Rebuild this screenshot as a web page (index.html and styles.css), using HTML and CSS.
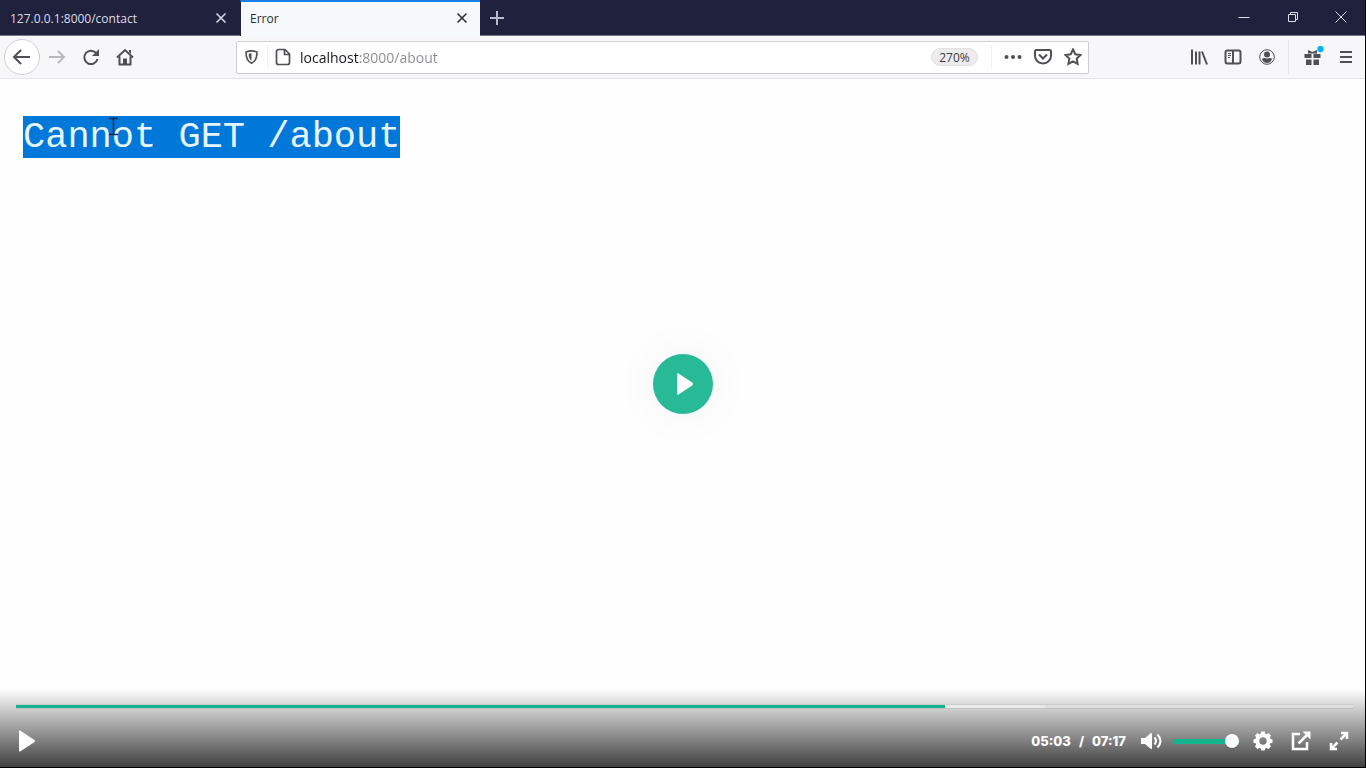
FILE: index.html
```
<!DOCTYPE html>
<html lang="en">
<head>
<meta charset="utf-8">
<meta name="viewport" content="width=device-width, initial-scale=1">
<title>Error</title>
<link rel="stylesheet" href="styles.css">
</head>
<body>
<div class="player">
  <header class="tabstrip">
    <div class="tab">
      <span class="tab-title">127.0.0.1:8000/contact</span>
      <button class="tab-close" aria-label="Close tab"><svg width="12" height="12" viewBox="0 0 12 12"><path d="M1.500 1.500l9 9m0-9l-9 9"/></svg></button>
    </div>
    <div class="tab tab-active">
      <span class="tab-title">Error</span>
      <button class="tab-close" aria-label="Close tab"><svg width="12" height="12" viewBox="0 0 12 12"><path d="M1.500 1.500l9 9m0-9l-9 9"/></svg></button>
    </div>
    <button class="new-tab" aria-label="New tab"><svg width="16" height="16" viewBox="0 0 16 16"><path d="M8 1v14M1 8h14"/></svg></button>
    <div class="window-buttons">
      <button aria-label="Minimize"><svg width="12" height="12" viewBox="0 0 12 12"><path d="M.5 6.500h11"/></svg></button>
      <button aria-label="Restore"><svg width="12" height="12" viewBox="0 0 12 12"><path d="M1.500 3.500h7v7h-7zM3.500 3.500v-2h7v7h-2"/></svg></button>
      <button aria-label="Close window"><svg width="12" height="12" viewBox="0 0 12 12"><path d="M.5 .5l11 11m0-11l-11 11"/></svg></button>
    </div>
  </header>

  <nav class="toolbar">
    <button class="tool tool-back" aria-label="Back"><svg width="20" height="20" viewBox="0 0 20 20"><path d="M18 10H2.500M9 3l-7 7 7 7"/></svg></button>
    <button class="tool tool-disabled" aria-label="Forward"><svg width="18" height="18" viewBox="0 0 18 18"><path d="M1 9h15M10 3l6 6-6 6"/></svg></button>
    <button class="tool" aria-label="Reload"><svg width="18" height="18" viewBox="0 0 18 18"><path d="M14.500 5.500A6.700 6.700 0 1 0 15.500 11"/><path class="fill" d="M17 1v7h-7z"/></svg></button>
    <button class="tool" aria-label="Home"><svg width="18" height="18" viewBox="0 0 18 18"><path d="M1 9.500l8-7.500 8 7.500M3.500 8.500v8h11v-8"/><path class="fill" d="M7 16v-5.500h4V16zM13 2h2v4l-2-2z"/></svg></button>

    <div class="urlbar">
      <button class="url-button shield" aria-label="Tracking protection"><svg width="16" height="16" viewBox="0 0 16 16"><path d="M8 1.500c2 0 4 .4 5.800 1.200C14 9 12.500 12.500 8 14.700 3.500 12.500 2 9 2.200 2.700 4 1.900 6 1.500 8 1.500z"/><path class="fill" d="M8 4v8C5.800 10.500 5 8.500 5 4.600z"/></svg></button>
      <button class="url-button" aria-label="Page information"><svg width="16" height="18" viewBox="0 0 16 18"><path d="M3.500 1.500H10l4.500 4.500v8.500a2 2 0 0 1-2 2h-9a2 2 0 0 1-2-2v-11a2 2 0 0 1 2-2zM9.500 2v4.500h5"/></svg></button>
      <input class="url-input" type="text" aria-label="Address" value="localhost:8000/about">
      <button class="zoom-level">270%</button>
      <div class="url-actions">
        <button aria-label="Page actions"><svg width="18" height="18" viewBox="0 0 18 18"><circle class="fill" cx="2.500" cy="9" r="2"/><circle class="fill" cx="9" cy="9" r="2"/><circle class="fill" cx="15.500" cy="9" r="2"/></svg></button>
        <button aria-label="Save to Pocket"><svg width="18" height="18" viewBox="0 0 18 18"><path d="M2.500 2h13A1.500 1.500 0 0 1 17 3.500V8a8 7.500 0 0 1-16 0V3.500A1.500 1.500 0 0 1 2.500 2zM5 6.500l4 4 4-4"/></svg></button>
        <button aria-label="Bookmark this page"><svg width="18" height="18" viewBox="0 0 18 18"><path d="M9 1.500l2.300 4.800 5.200.7-3.800 3.600.9 5.300L9 13.400l-4.600 2.500.9-5.300L1.500 7l5.200-.7z"/></svg></button>
      </div>
    </div>

    <div class="tool-group">
      <button class="tool" aria-label="Library"><svg width="18" height="18" viewBox="0 0 18 18"><path d="M2 1.500v15M6 3.500v13M9.500 3.500v13M12 3.500l5 13"/></svg></button>
      <button class="tool" aria-label="Sidebars"><svg width="18" height="18" viewBox="0 0 18 18"><rect x="1.500" y="2.500" width="15" height="13" rx="2"/><path d="M9 2.500v13"/><path class="thin" d="M4 5.500h3M4 7.500h3M4 9.500h2"/></svg></button>
      <button class="tool" aria-label="Account"><svg width="18" height="18" viewBox="0 0 18 18"><circle class="thin" cx="9" cy="9" r="7.300"/><circle class="fill" cx="9" cy="6.500" r="3"/><path class="fill" d="M4 11c2-2 3-.5 5-.5s3-1.500 5 .5c-1 3-3 4-5 4s-4-1-5-4z"/></svg></button>
    </div>
    <div class="tool-group tool-group-end">
      <button class="tool" aria-label="What's new"><svg width="22" height="22" viewBox="0 0 22 22"><path class="fill" d="M2.500 8h7v4h-7zM11.500 8h7v4h-7zM4 13.500h5.500V19H4zM11.500 13.500H17V19h-5.500zM6 4l4.500 2L15 4v3.500H6z"/><circle class="dot" cx="18.500" cy="3" r="3.200"/></svg></button>
      <button class="tool tool-menu" aria-label="Open menu"><svg width="16" height="16" viewBox="0 0 16 16"><path d="M2 3h12M2 8h12M2 13h12"/></svg></button>
    </div>
  </nav>

  <main class="page">
    <pre class="message"><span class="selection">Cannot GET /about</span></pre>
    <svg class="text-cursor" width="11" height="20" viewBox="0 0 11 20"><path d="M1 1.500h9M5.500 1.500v16M1 17.500h9"/></svg>
  </main>

  <button class="play-large" aria-label="Play"><svg width="18" height="22" viewBox="0 0 18 22"><path d="M2.500 .4l13.700 9.200q1.600 1.400 0 2.800L2.500 21.600Q1 22 1 20.500v-19Q1 0 2.500 .4z"/></svg></button>

  <footer class="controls">
    <input class="seek" type="range" min="0" max="437" value="303" aria-label="Seek">
    <div class="control-row">
      <button class="play-small" aria-label="Play"><svg width="18" height="22" viewBox="0 0 18 22"><path d="M1 1.500Q1 0 2.500 .7L16.500 10q1.300 1 0 2L2.500 21.300Q1 22 1 20.500z"/></svg></button>
      <div class="time"><span>05:03</span><span>/</span><span>07:17</span></div>
      <button class="mute" aria-label="Mute"><svg width="22" height="18" viewBox="0 0 22 18"><path d="M0 6h4l6-5q1-.5 1 1v14q0 1.500-1 1l-6-5H0z"/><path class="wave" d="M13.500 5.500q3 3.500 0 7M16.500 2.500q6 6.500 0 13"/></svg></button>
      <input class="volume" type="range" min="0" max="100" value="100" aria-label="Volume">
      <button class="settings" aria-label="Settings"><svg width="20" height="20" viewBox="0 0 20 20"><path fill-rule="evenodd" d="M8.300 .5h3.400l.6 2.200 1.300.5 2-1.100 2.400 2.400-1.100 2 .5 1.300 2.100.6v3.300l-2.100.6-.5 1.300 1.100 2-2.400 2.400-2-1.100-1.300.5-.6 2.100H8.300l-.6-2.100-1.300-.5-2 1.100L2 15.600l1.100-2-.5-1.300-2.100-.6V8.400l2.100-.6.5-1.300-1.100-2 2.400-2.400 2 1.100 1.300-.5zM10 6.300a3.700 3.700 0 1 0 0 7.400 3.700 3.700 0 0 0 0-7.400z"/></svg></button>
      <button class="popout" aria-label="Picture in picture"><svg width="20" height="20" viewBox="0 0 20 20"><path class="line" d="M9 3H2v15h14v-7M7.500 12.500L16 4"/><path d="M11.500 .5h8v8z"/></svg></button>
      <button class="fullscreen" aria-label="Full screen"><svg width="20" height="20" viewBox="0 0 20 20"><path class="line" d="M12 2h6v6M18 2l-6.500 6.500M2 12v6h6M2 18l6.500-6.500"/></svg></button>
    </div>
  </footer>
</div>
</body>
</html>
```
FILE: styles.css
```
* { box-sizing: border-box; }

body {
  margin: 0;
  background: #000;
  font-family: "Open Sans", "Noto Sans", sans-serif;
}

button {
  display: flex;
  align-items: center;
  justify-content: center;
  flex: none;
  padding: 0;
  border: 0;
  background: none;
  color: inherit;
}

svg {
  display: block;
  fill: none;
  stroke: currentColor;
  stroke-width: 2;
}

svg .fill { fill: currentColor; stroke: none; }
svg .thin { stroke-width: 1; }
svg .dot { fill: #00b3f4; stroke: none; }

.player {
  position: relative;
  display: flex;
  flex-direction: column;
  min-height: 100vh;
  border-right: 1px solid #000;
  border-bottom: 1px solid #000;
  background: #fefefe;
}

/* Tabs */
.tabstrip {
  display: flex;
  height: 36px;
  border-bottom: 1px solid #77778a;
  background: #20213d;
  color: #dcdce8;
}

.tab {
  display: flex;
  align-items: center;
  justify-content: space-between;
  width: 240px;
  padding: 1px 13px 0 10px;
  font-size: 12px;
}

.tab-active {
  height: 36px;
  padding: 0 12px 2px 9px;
  border-top: 2px solid #1580e4;
  border-left: 1px solid #20213d;
  background: #f5f9fc;
  color: #2b2b33;
}

.tab-close svg { stroke-width: 1.5; }
.new-tab { width: 34px; }
.new-tab svg { stroke: #b9b9d0; }

.window-buttons {
  display: flex;
  margin-left: auto;
  padding-bottom: 2px;
}

.window-buttons button { width: 49px; }
.window-buttons button:last-child { width: 48px; }
.window-buttons svg { stroke-width: 1; }

/* Navigation toolbar */
.toolbar {
  display: flex;
  align-items: center;
  height: 43px;
  padding: 0 3px 0 4px;
  border-bottom: 1px solid #e4e4e6;
  background: #f7f7f9;
  color: #505054;
}

.tool {
  width: 34px;
  height: 34px;
}

.tool-back {
  width: 36px;
  height: 36px;
  border: 1px solid #cfcfd3;
  border-radius: 50%;
  background: #fff;
}

.tool-disabled { color: #b9b9bd; }
.tool-menu { width: 32px; }

.urlbar {
  display: flex;
  flex: 1;
  align-items: center;
  min-width: 0;
  height: 33px;
  margin: 0 93px 0 94px;
  padding-left: 7px;
  border: 1px solid #cecece;
  border-radius: 2px;
  background: #fff;
}

.url-button { width: 30px; height: 24px; }
.url-button svg { stroke-width: 1.7; }

.shield {
  width: 24px;
  padding-right: 8px;
  border-right: 1px solid #f0f0f0;
}

.url-input {
  flex: 1;
  min-width: 0;
  margin-left: 2px;
  padding: 0;
  border: 0;
  outline: 0;
  background: linear-gradient(90deg, #16161a 59px, #8c8c90 59px) text;
  color: transparent;
  font: 14px "Open Sans", "Noto Sans", sans-serif;
}

.zoom-level {
  width: 47px;
  height: 18px;
  border: 1px solid #e2e2e2;
  border-radius: 9px;
  background: #ececee;
  color: #3c3c40;
  font: 12px "Open Sans", "Noto Sans", sans-serif;
}

.url-actions {
  display: flex;
  margin-left: 13px;
  border-left: 1px solid #f0f0f0;
}

.url-actions button { width: 30px; height: 24px; }
.url-actions button:first-child { width: 36px; padding-left: 6px; }

.tool-group { display: flex; }

.tool-group-end {
  margin-left: 4px;
  padding-left: 7px;
  border-left: 1px solid #e6e6ea;
}

/* Page body */
.page {
  position: relative;
  flex: 1;
  padding: 37px 23px;
}

.message {
  margin: 0;
  font: 37px/42px "Courier New", "Liberation Mono", monospace;
}

.selection {
  display: inline-block;
  background: #0078d9;
  color: #e6f5ff;
}

.text-cursor {
  position: absolute;
  top: 38px;
  left: 108px;
  color: #14284e;
  stroke-width: 1.5;
}

.play-large {
  position: absolute;
  top: 50%;
  left: 50%;
  width: 60px;
  height: 60px;
  margin: -30px;
  border-radius: 50%;
  background: #28ba96;
  box-shadow: 0 0 45px rgba(0, 0, 0, .06);
  color: #fff;
}

.play-large svg { margin-left: 5px; }
.play-large svg,
.controls svg { fill: currentColor; stroke: none; }
.controls svg .line { fill: none; stroke: currentColor; stroke-width: 2.5; }
.controls svg .wave { fill: none; stroke: currentColor; stroke-width: 2; }

/* Player controls */
.controls {
  position: absolute;
  right: 0;
  bottom: 0;
  left: 0;
  padding: 15px 12px 10px 16px;
  background: linear-gradient(rgba(0, 0, 0, 0), rgba(0, 0, 0, .75));
  color: #fff;
}

.seek,
.volume {
  display: block;
  margin: 0;
  -webkit-appearance: none;
  appearance: none;
}

.seek {
  width: 100%;
  height: 5px;
  border: solid rgba(0, 0, 0, .06);
  border-width: 1px 0;
  background: linear-gradient(90deg, #13b38c 69.5%, #e9e9e9 69.5%, #e9e9e9 77%, rgba(255, 255, 255, .25) 77%) padding-box;
}

.seek::-webkit-slider-thumb {
  -webkit-appearance: none;
  width: 0;
  height: 0;
}

.control-row {
  display: flex;
  align-items: center;
  height: 32px;
  margin-top: 16px;
  padding-right: 4px;
}

.play-small { margin-left: 2px; }

.time {
  display: flex;
  gap: 8px;
  margin-left: auto;
  font: 800 13px "Inter", sans-serif;
}

.mute { margin-left: 15px; }

.volume {
  width: 66px;
  height: 14px;
  margin-left: 10px;
  background: linear-gradient(#13b38c, #13b38c) center / 100% 5px no-repeat;
}

.volume::-webkit-slider-thumb {
  -webkit-appearance: none;
  width: 14px;
  height: 14px;
  border-radius: 50%;
  background: #fff;
  box-shadow: 0 1px 1px rgba(0, 0, 0, .2);
}

.settings { margin-left: 14px; }
.popout { margin-left: 18px; }
.fullscreen { margin-left: 18px; }
```
